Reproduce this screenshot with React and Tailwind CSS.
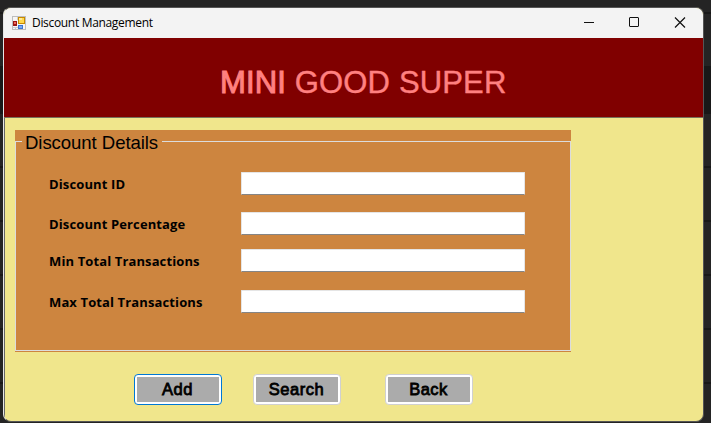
const fields = [
  { label: 'Discount ID', gap: 'mt-0', width: 'w-[75px]' },
  { label: 'Discount Percentage', gap: 'mt-[17px]', width: 'w-[137px]' },
  { label: 'Min Total Transactions', gap: 'mt-[14px]', width: 'w-[150px]' },
  { label: 'Max Total Transactions', gap: 'mt-[18px]', width: 'w-[154px]' },
];

function AppIcon() {
  return (
    <svg width="14" height="14" viewBox="0 0 14 14" shapeRendering="crispEdges">
      <rect x="0.5" y="0.5" width="13" height="13" fill="#f5f5f5" stroke="#bdbdbd" />
      <path d="M5.5 1v3M1 11.500h5M3.500 11v2" stroke="#cccccc" />
      <rect x="1" y="5" width="4" height="5" fill="#9b1712" />
      <rect x="2" y="6" width="2" height="2" fill="#ef6a5a" />
      <rect x="6" y="1" width="7" height="7" fill="#c88a00" />
      <rect x="7" y="2" width="5" height="5" fill="#ffd84d" />
      <rect x="7" y="2" width="3" height="2" fill="#ffeb9a" />
      <rect x="6" y="9" width="5" height="4" fill="#3d74d0" />
      <rect x="7" y="10" width="3" height="2" fill="#76aaf5" />
    </svg>
  );
}

function TitleBar() {
  return (
    <div className="flex h-[30px] items-center bg-[#f3f3f3] pl-[8px] pr-[17px]">
      <AppIcon />
      <span className="ml-[6px] whitespace-nowrap font-['Open_Sans',sans-serif] text-[12px] leading-[16px] tracking-[-0.32px] text-black">
        Discount Management
      </span>
      <svg className="ml-auto" width="103" height="12" viewBox="0 0 103 12" fill="none" stroke="#111">
        <path d="M1 5.500h10" shapeRendering="crispEdges" />
        <rect x="46.500" y="0.500" width="9" height="9" rx="0.5" />
        <path d="M92 0.500l10 10M102 0.500L92 10.500" strokeWidth="1.200" />
      </svg>
    </div>
  );
}

function Field({ label, gap, width }) {
  return (
    <div className={`flex h-[23px] items-center ${gap}`}>
      <div className="w-[192px]">
        <div className={`${width} whitespace-nowrap font-['Open_Sans','Noto_Sans',sans-serif] text-[13px] font-bold leading-[18px] tracking-[0.12px]`}>
          {label}
        </div>
      </div>
      <input
        aria-label={label}
        className="h-[23px] w-[284px] rounded-[1px] border border-b-[#858585] border-l-[#e5e5e5] border-r-[#e5e5e5] border-t-[#e5e5e5] bg-white px-1 outline-none"
      />
    </div>
  );
}

function Button({ children, className }) {
  return (
    <button className={`flex h-[31px] w-[88px] rounded-[4px] border bg-white p-[2px] ${className}`}>
      <span className="flex h-[25px] w-[82px] items-center justify-center bg-[#ababab] pb-[2px] pr-[1px] font-['Liberation_Sans',Arial,sans-serif] text-[16.500px] font-normal leading-[18px] tracking-[0.5px] text-black [-webkit-text-stroke:0.8px_#000]">
        {children}
      </span>
    </button>
  );
}

export default function App() {
  return (
    <div className="h-[423px] w-[711px] overflow-hidden bg-[linear-gradient(to_bottom,#242424_12px,#181818_12px,#181818_14px,#242424_14px,#242424_66px,#181818_66px,#181818_114px,#242424_114px,#242424_166px,#181818_166px,#181818_168px,#242424_168px,#242424_220px,#181818_220px,#181818_222px,#242424_222px,#242424_274px,#181818_274px,#181818_276px,#242424_276px,#242424_328px,#181818_328px,#181818_330px,#242424_330px,#242424_382px,#181818_382px,#181818_384px,#242424_384px)] pl-[3px] pt-[7px] text-black">
      <div className="h-[415px] w-[701px] overflow-hidden rounded-[8px] border border-b-[#555] border-l-[#e6e6e6] border-r-[#555] border-t-[#555] bg-[#f0e68c]">
        <TitleBar />
        <header className="flex h-[80px] items-center border-b border-[#77715a] bg-[#800000] pl-[216px] pt-[11px]">
          <h1 className="whitespace-nowrap font-['Liberation_Sans',Arial,sans-serif] text-[31px] font-normal leading-[36px] tracking-[0.15px] text-[#ff8080] [-webkit-text-stroke:0.4px_#ff8080]">
            <span className="[-webkit-text-stroke:1px_#ff8080]">MINI</span> GOOD SUPER
          </h1>
        </header>
        <main className="h-[303px] border-l border-[#666] pl-[10px] pt-[12px]">
          <section className="h-[222px] w-[556px] bg-[#cd853f] pb-px pt-[11px]">
            <div className="h-[210px] border border-[#dcdcdc]">
              <div className="-mt-px flex h-[31px] pl-[6px]">
                <h2 className="-mt-[9px] h-[22px] whitespace-nowrap bg-[#cd853f] pl-[3px] pr-[4px] font-['Liberation_Sans',Arial,sans-serif] text-[18.600px] font-normal leading-[22px] tracking-[-0.08px]">
                  Discount Details
                </h2>
              </div>
              <div className="pl-[33px]">
                {fields.map((field) => (
                  <Field key={field.label} {...field} />
                ))}
              </div>
            </div>
          </section>
          <div className="flex pl-[119px] pt-[22px]">
            <Button className="border-[#0078d4]">Add</Button>
            <Button className="ml-[31px] border-[#d0d0d0]">Search</Button>
            <Button className="ml-[44px] border-[#d0d0d0]">Back</Button>
          </div>
        </main>
      </div>
    </div>
  );
}
